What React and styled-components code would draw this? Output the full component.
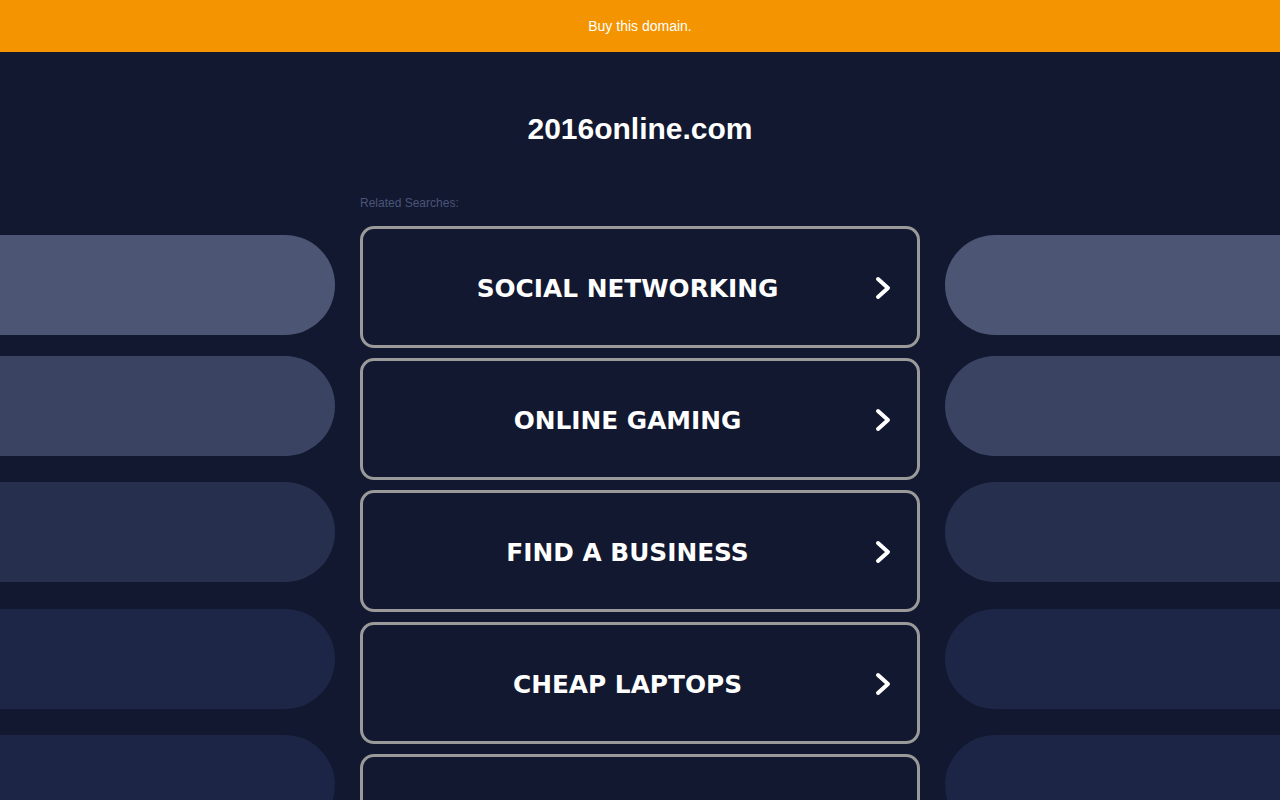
import styled, { createGlobalStyle } from "styled-components";

const GlobalStyle = createGlobalStyle`
  html, body {
    margin: 0;
    padding: 0;
    background-color: #111830;
    overflow: hidden;
  }
`;

const Page = styled.div`
  width: 1280px;
  height: 800px;
  overflow: hidden;
  background-color: #111830;
  font-family: "Liberation Sans", Arial, sans-serif;
`;

const TopBar = styled.div`
  height: 52px;
  display: flex;
  align-items: center;
  justify-content: center;
  background-color: #f39400;
  color: #ffffff;
  font-size: 14px;
`;

const Title = styled.h1`
  margin: 59px 0 0;
  line-height: 36px;
  font-size: 30px;
  font-weight: bold;
  text-align: center;
  color: #ffffff;
`;

const Columns = styled.div`
  margin-top: 49px;
  display: grid;
  grid-template-columns: 335px 560px 335px;
  column-gap: 25px;
`;

const Side = styled.div`
  padding-top: 39px;
  display: flex;
  flex-direction: column;
`;

const Pill = styled.div`
  height: 100px;
  margin-top: ${(p) => p.$gap}px;
  background-color: ${(p) => p.$color};
  border-radius: ${(p) => (p.$right ? "50px 0 0 50px" : "0 50px 50px 0")};
  flex-shrink: 0;
`;

const Center = styled.div`
  display: flex;
  flex-direction: column;
`;

const Label = styled.div`
  font-size: 12px;
  line-height: 14px;
  color: #4b5577;
  margin-bottom: 16px;
`;

const List = styled.div`
  display: flex;
  flex-direction: column;
  gap: 10px;
`;

const Search = styled.a`
  box-sizing: border-box;
  height: 122px;
  display: flex;
  align-items: center;
  border: 3px solid #9a9a9a;
  border-radius: 14px;
  color: #ffffff;
  text-decoration: none;
  flex-shrink: 0;
`;

const SearchText = styled.span`
  flex: 1;
  padding-left: 17px;
  padding-top: 2px;
  text-align: center;
  font-family: "DejaVu Sans", Verdana, sans-serif;
  font-weight: bold;
  font-size: 24.8px;
`;

const Chevron = styled.svg`
  width: 16px;
  height: 24px;
  margin-right: 26px;
  margin-top: 2px;
  flex-shrink: 0;
`;

const pills = [
  { color: "#4c5674", gap: 0 },
  { color: "#3a4362", gap: 21 },
  { color: "#272f4f", gap: 26 },
  { color: "#1d2646", gap: 27 },
  { color: "#1c2546", gap: 26 },
];

const searches = [
  "SOCIAL NETWORKING",
  "ONLINE GAMING",
  "FIND A BUSINESS",
  "CHEAP LAPTOPS",
  "",
];

const App = () => {
  return (
    <Page>
      <GlobalStyle />
      <TopBar>Buy this domain.</TopBar>
      <Title>2016online.com</Title>
      <Columns>
        <Side>
          {pills.map((p, i) => (
            <Pill key={i} $color={p.color} $gap={p.gap} />
          ))}
        </Side>
        <Center>
          <Label>Related Searches:</Label>
          <List>
            {searches.map((s, i) => (
              <Search key={i} href="#">
                <SearchText>{s}</SearchText>
                {s && (
                  <Chevron viewBox="0 0 16 24">
                    <polyline
                      points="3,3 13,12 3,21"
                      fill="none"
                      stroke="#ffffff"
                      strokeWidth="4"
                      strokeLinecap="round"
                      strokeLinejoin="round"
                    />
                  </Chevron>
                )}
              </Search>
            ))}
          </List>
        </Center>
        <Side>
          {pills.map((p, i) => (
            <Pill key={i} $color={p.color} $gap={p.gap} $right />
          ))}
        </Side>
      </Columns>
    </Page>
  );
};

export default App;
